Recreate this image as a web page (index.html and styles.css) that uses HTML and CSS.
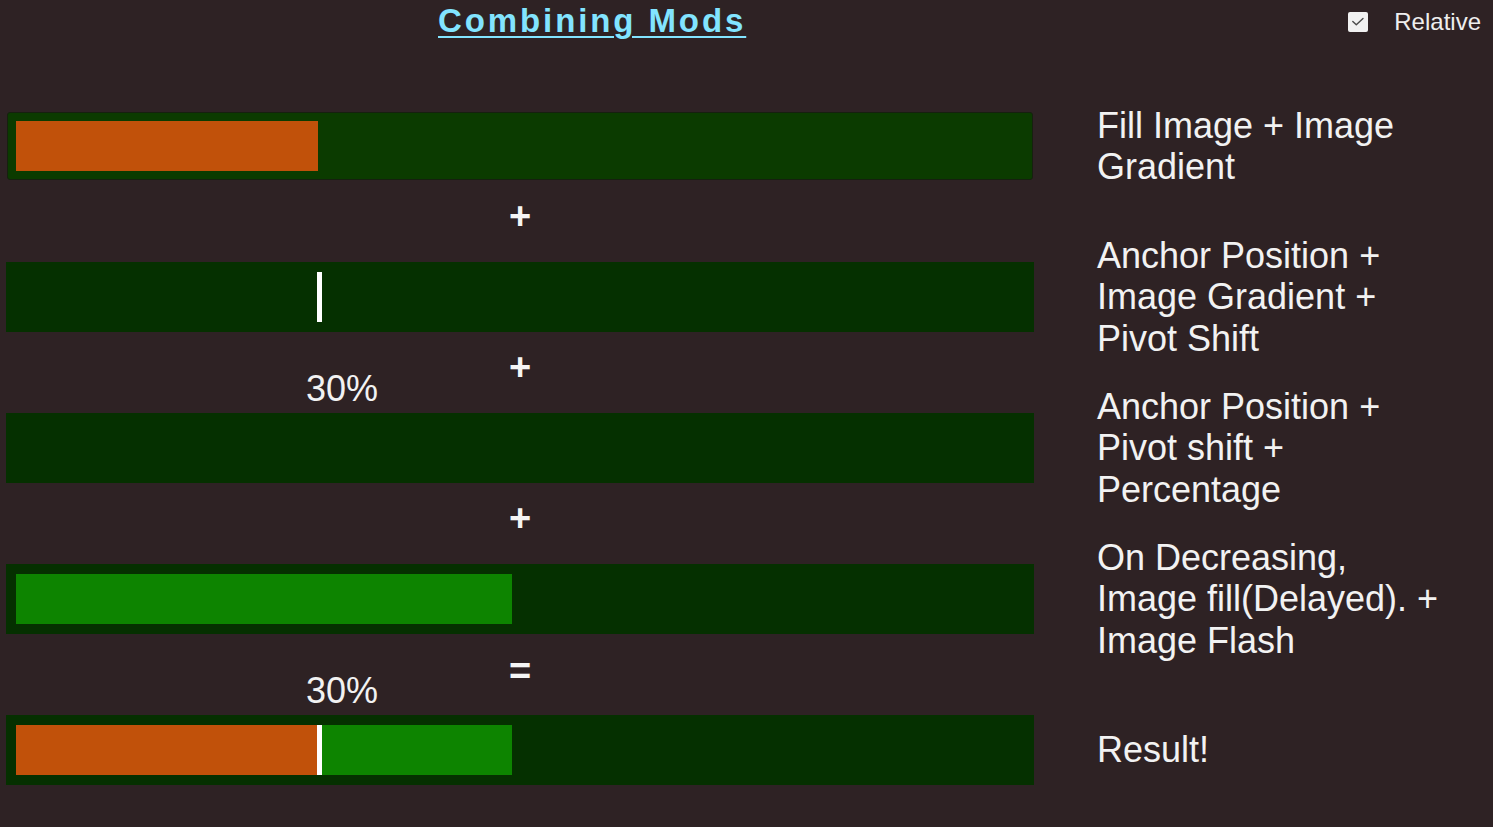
FILE: index.html
```html
<!DOCTYPE html>
<html lang="en">
<head>
<meta charset="utf-8">
<title>Combining Mods</title>
<link rel="stylesheet" href="styles.css">
</head>
<body>
<header class="top">
  <h1 class="title">Combining Mods</h1>
  <label class="toggle">
    <span class="checkbox">
      <svg width="20" height="20" viewBox="0 0 20 20"><polyline points="4.8,9.4 8.3,12.8 15,6.4" fill="none" stroke="#4a4a4a" stroke-width="1.4" stroke-linecap="round" stroke-linejoin="round"/></svg>
    </span>
    <span class="toggle-text">Relative</span>
  </label>
</header>

<main class="board">
  <div class="row">
    <div class="slot">
      <div class="bar bar-framed">
        <div class="track"><div class="fill fill-orange" style="width:30%"></div></div>
      </div>
    </div>
    <div class="label"><p>Fill Image + Image<br>Gradient</p></div>
  </div>

  <div class="op"><span class="op-sign">+</span></div>

  <div class="row">
    <div class="slot">
      <div class="bar">
        <div class="track"><div class="marker" style="left:30%"></div></div>
      </div>
    </div>
    <div class="label"><p>Anchor Position +<br>Image Gradient +<br>Pivot Shift</p></div>
  </div>

  <div class="op"><span class="op-sign">+</span><span class="pct">30%</span></div>

  <div class="row">
    <div class="slot">
      <div class="bar">
        <div class="track"></div>
      </div>
    </div>
    <div class="label"><p>Anchor Position +<br>Pivot shift +<br>Percentage</p></div>
  </div>

  <div class="op"><span class="op-sign">+</span></div>

  <div class="row">
    <div class="slot">
      <div class="bar">
        <div class="track"><div class="fill fill-green" style="width:49.2%"></div></div>
      </div>
    </div>
    <div class="label"><p>On Decreasing,<br>Image fill(Delayed). +<br>Image Flash</p></div>
  </div>

  <div class="op op-eq"><span class="op-sign">=</span><span class="pct">30%</span></div>

  <div class="row">
    <div class="slot">
      <div class="bar">
        <div class="track">
          <div class="fill fill-orange" style="width:30%"></div><div class="fill fill-green" style="width:19.2%"></div>
          <div class="marker" style="left:30%"></div>
        </div>
      </div>
    </div>
    <div class="label"><p>Result!</p></div>
  </div>
</main>
</body>
</html>
```
FILE: styles.css
```css
* { box-sizing: border-box; }

html, body {
  margin: 0;
  padding: 0;
  background: #2e2224;
  color: #f2f2f2;
  font-family: "Liberation Sans", Arial, sans-serif;
}

body {
  width: 1493px;
  height: 827px;
  overflow: hidden;
}

.top {
  display: flex;
  align-items: flex-start;
  height: 111px;
  padding-right: 12px;
}

.title {
  margin: 2px 0 0 438px;
  font-size: 33px;
  line-height: 38px;
  font-weight: bold;
  letter-spacing: 2.9px;
  color: #82e4ff;
  text-decoration: underline;
  text-decoration-thickness: 2px;
  text-underline-offset: 4px;
}

.toggle {
  margin-left: auto;
  margin-top: 8px;
  display: flex;
  align-items: center;
  gap: 26px;
}

.checkbox {
  width: 20px;
  height: 20px;
  background: #f1f1f1;
  border-radius: 2px;
  display: flex;
}

.toggle-text {
  font-size: 24px;
  line-height: 28px;
  color: #eeeeee;
}

.board {
  display: flex;
  flex-direction: column;
  padding-left: 6px;
}

.row {
  display: flex;
  height: 70px;
  gap: 63px;
}

.slot {
  width: 1028px;
  height: 70px;
  flex: none;
}

.bar {
  height: 70px;
  background: #053000;
  padding: 10px;
}

.bar-framed {
  height: 68px;
  margin: 1px;
  padding: 8px;
  background: #0b3b00;
  border: 1px solid #16200f;
  border-radius: 3px;
}

.track {
  position: relative;
  display: flex;
  height: 50px;
}

.fill {
  height: 50px;
}

.fill-orange { background: #c1510a; }
.fill-green { background: #0d8400; }

.marker {
  position: absolute;
  top: 0;
  width: 5px;
  height: 50px;
  margin-left: -1px;
  background: #ffffff;
}

.label {
  display: flex;
  align-items: center;
  height: 70px;
}

.label p {
  margin: 0;
  font-size: 36px;
  line-height: 1.15;
  white-space: nowrap;
  color: #f2f2f2;
}

.op {
  position: relative;
  width: 1028px;
  height: 81px;
  padding-top: 16px;
  text-align: center;
}

.op-eq {
  padding-top: 18px;
}

.op-sign {
  font-size: 38px;
  line-height: 38px;
  font-weight: bold;
  color: #f5f5f5;
}

.pct {
  position: absolute;
  left: 300px;
  bottom: 4px;
  font-size: 36px;
  line-height: 1.15;
  color: #f2f2f2;
}
```
